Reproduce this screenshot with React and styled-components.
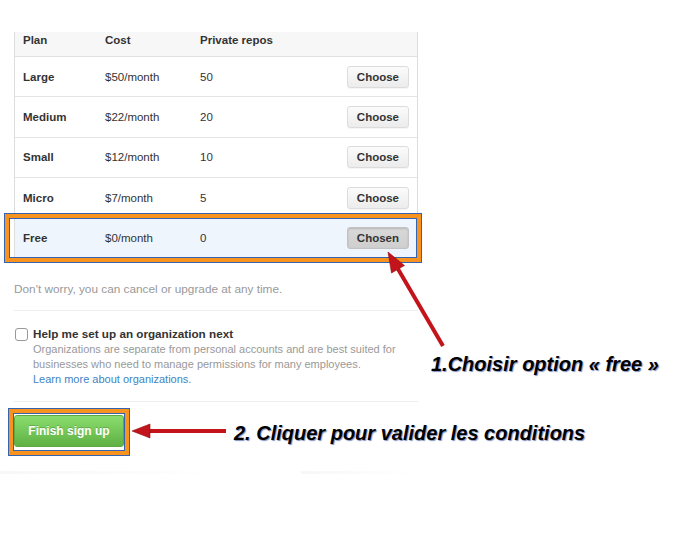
import React from "react";
import styled, { createGlobalStyle } from "styled-components";

const plans = [
  { name: "Large", cost: "$50/month", repos: "50" },
  { name: "Medium", cost: "$22/month", repos: "20" },
  { name: "Small", cost: "$12/month", repos: "10" },
  { name: "Micro", cost: "$7/month", repos: "5" },
  { name: "Free", cost: "$0/month", repos: "0", chosen: true },
];

const App = () => {
  return (
    <Page>
      <GlobalStyle />
      <Column>
        <Table>
          <HeaderRow>
            <span>Plan</span>
            <span>Cost</span>
            <span>Private repos</span>
            <span />
          </HeaderRow>
          {plans.map((plan) => (
            <Row key={plan.name} $chosen={plan.chosen}>
              <PlanName>{plan.name}</PlanName>
              <Cell>{plan.cost}</Cell>
              <Cell>{plan.repos}</Cell>
              <ChooseButton $chosen={plan.chosen}>
                {plan.chosen ? "Chosen" : "Choose"}
              </ChooseButton>
              {plan.chosen && <RowHighlight />}
            </Row>
          ))}
        </Table>

        <Note>Don't worry, you can cancel or upgrade at any time.</Note>
        <Divider />

        <OrgOption>
          <Checkbox />
          <div>
            <OrgTitle>Help me set up an organization next</OrgTitle>
            <OrgText>
              Organizations are separate from personal accounts and are best suited for
              <br />
              businesses who need to manage permissions for many employees.
              <br />
              <LearnLink>Learn more about organizations.</LearnLink>
            </OrgText>
          </div>
        </OrgOption>
        <Divider $top={14} />

        <FinishRow>
          <ButtonWrap>
            <FinishButton>Finish sign up</FinishButton>
            <ButtonHighlight />
          </ButtonWrap>
          <svg width="94" height="16" viewBox="0 0 94 16">
            <line x1="94" y1="8" x2="16" y2="8" stroke="#c3141b" strokeWidth="4" />
            <polygon points="0,8 18,1 18,15" fill="#c3141b" stroke="#8e0b10" strokeWidth="0.6" />
          </svg>
          <Callout $shift={3}>2. Cliquer pour valider les conditions</Callout>
        </FinishRow>

        <FadeLines>
          <FadeLine $width={320} />
          <FadeLine $width={170} $offset={80} />
        </FadeLines>
      </Column>

      <ChooseArrow width="70" height="110" viewBox="0 0 70 110">
        <line x1="63" y1="101" x2="18" y2="24" stroke="#c3141b" strokeWidth="4" />
        <polygon points="8,7 24.5,20.5 11.5,28" fill="#c3141b" stroke="#8e0b10" strokeWidth="0.6" />
      </ChooseArrow>
      <FreeCallout>1.Choisir option « free »</FreeCallout>
    </Page>
  );
};

const GlobalStyle = createGlobalStyle`
  body {
    margin: 0;
    background: #ffffff;
    font-family: "Liberation Sans", Arial, sans-serif;
    font-size: 11.5px;
    color: #333333;
  }
`;

const Page = styled.div`
  position: relative;
  width: 700px;
  height: 536px;
  padding: 32px 0 0 14px;
  box-sizing: border-box;
  overflow: hidden;
`;

const Column = styled.div`
  width: 404px;
`;

const Table = styled.div`
  border-left: 1px solid #dddddd;
  border-right: 1px solid #dddddd;
`;

const gridCols = `
  display: grid;
  grid-template-columns: 82px 95px 1fr auto;
  align-items: center;
  padding: 0 8px 0 8px;
  box-sizing: border-box;
`;

const HeaderRow = styled.div`
  ${gridCols}
  height: 25px;
  align-items: start;
  line-height: 16px;
  background: #f7f7f7;
  border-bottom: 1px solid #e1e1e1;
  font-weight: bold;
`;

const Row = styled.div`
  ${gridCols}
  position: relative;
  height: 40.4px;
  border-bottom: 1px solid #e5e5e5;
  background: ${(p) => (p.$chosen ? "#eef5fd" : "#ffffff")};
`;

const PlanName = styled.span`
  font-weight: bold;
`;

const Cell = styled.span``;

const ChooseButton = styled.button`
  height: 22px;
  padding: 0 9px;
  font-family: "Liberation Sans", Arial, sans-serif;
  font-size: 11.5px;
  font-weight: bold;
  color: #333333;
  border: 1px solid ${(p) => (p.$chosen ? "#c2c2c2" : "#dcdcdc")};
  border-radius: 3px;
  background: ${(p) =>
    p.$chosen
      ? "linear-gradient(#d9d9d9, #cfcfcf)"
      : "linear-gradient(#fbfbfb, #ececec)"};
  box-shadow: ${(p) =>
    p.$chosen ? "inset 0 1px 2px rgba(0,0,0,0.15)" : "0 1px 0 rgba(0,0,0,0.04)"};
`;

const RowHighlight = styled.div`
  position: absolute;
  top: -6px;
  left: -11px;
  right: -5px;
  bottom: -5px;
  border: 1px solid #3563ad;
  box-shadow: inset 0 0 0 4px #f7931e, inset 0 0 0 5px #3563ad;
  pointer-events: none;
`;

const Note = styled.p`
  margin: 22px 0 0;
  line-height: 16px;
  font-size: 11.8px;
  color: #999999;
`;

const Divider = styled.div`
  height: 1px;
  margin-top: ${(p) => p.$top || 13}px;
  background: #eeeeee;
`;

const OrgOption = styled.div`
  display: flex;
  gap: 5px;
  margin-top: 15px;
`;

const Checkbox = styled.span`
  width: 11px;
  height: 11px;
  margin: 2px 0 0 1px;
  border: 1px solid #999999;
  border-radius: 3px;
  background: #ffffff;
  flex-shrink: 0;
`;

const OrgTitle = styled.div`
  font-weight: bold;
  font-size: 11.7px;
  line-height: 16px;
`;

const OrgText = styled.div`
  font-size: 11px;
  line-height: 15px;
  color: #999999;
  white-space: nowrap;
`;

const LearnLink = styled.a`
  color: #4183c4;
  text-decoration: none;
`;

const FinishRow = styled.div`
  display: flex;
  align-items: center;
  gap: 8px;
  margin-top: 13px;
  width: 700px;
`;

const ButtonWrap = styled.div`
  position: relative;
`;

const FinishButton = styled.button`
  display: block;
  width: 110px;
  height: 32px;
  font-family: "Liberation Sans", Arial, sans-serif;
  font-size: 12px;
  font-weight: bold;
  color: #ffffff;
  text-shadow: 0 -1px 0 rgba(0, 0, 0, 0.2);
  border: 1px solid #5ca941;
  border-radius: 3px;
  background: linear-gradient(#8add6d, #60b044);
`;

const ButtonHighlight = styled.div`
  position: absolute;
  top: -7px;
  left: -6px;
  right: -6px;
  bottom: -9px;
  border: 1px solid #3563ad;
  box-shadow: inset 0 0 0 4px #f7931e, inset 0 0 0 5px #3563ad;
  pointer-events: none;
`;

const Callout = styled.span`
  margin-top: ${(p) => (p.$shift || 0) * 2}px;
  font-size: 20px;
  font-weight: bold;
  font-style: italic;
  color: #000000;
  text-shadow: 1px 1px 1px rgba(40, 70, 150, 0.6);
  white-space: nowrap;
`;

const FreeCallout = styled(Callout)`
  position: absolute;
  left: 431px;
  top: 353px;
  margin-top: 0;
`;

const ChooseArrow = styled.svg`
  position: absolute;
  left: 380px;
  top: 245px;
`;

const FadeLines = styled.div`
  display: flex;
  margin: 24px 0 0 -14px;
`;

const FadeLine = styled.div`
  width: ${(p) => p.$width}px;
  margin-left: ${(p) => p.$offset || 0}px;
  height: 3px;
  background: linear-gradient(to right, #f7f7f7, rgba(247, 247, 247, 0));
`;

export default App;
